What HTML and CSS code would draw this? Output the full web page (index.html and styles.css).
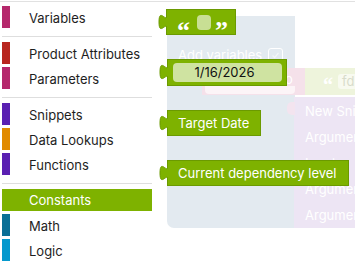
FILE: index.html
```html
<!DOCTYPE html>
<html lang="en">
<head>
<meta charset="utf-8">
<title>Blocks</title>
<link rel="stylesheet" href="styles.css">
</head>
<body>
<div class="app">
  <nav class="toolbox">
    <div class="cat"><span class="bar c-variables"></span><span class="label">Variables</span></div>
    <div class="sep"></div>
    <div class="cat"><span class="bar c-product"></span><span class="label">Product Attributes</span></div>
    <div class="cat"><span class="bar c-params"></span><span class="label">Parameters</span></div>
    <div class="sep"></div>
    <div class="cat"><span class="bar c-snippets"></span><span class="label">Snippets</span></div>
    <div class="cat"><span class="bar c-lookups"></span><span class="label">Data Lookups</span></div>
    <div class="cat"><span class="bar c-functions"></span><span class="label">Functions</span></div>
    <div class="sep"></div>
    <div class="cat selected"><span class="bar c-constants"></span><span class="label">Constants</span></div>
    <div class="cat"><span class="bar c-math"></span><span class="label">Math</span></div>
    <div class="cat"><span class="bar c-logic"></span><span class="label">Logic</span></div>
  </nav>

  <main class="workspace">
    <div class="canvas">
      <div class="ws-panel-blue">
        <div class="ws-row"><span>Add variables</span><span class="ws-check"><svg viewBox="0 0 15 14" width="15" height="14"><path d="M4 7.5 L6.5 10 L11 4.5"/></svg></span></div>
      </div>
      <div class="ws-pink">
        <span class="ws-pink-o">o</span>
        <div class="ws-pink-foot"></div>
      </div>
      <div class="ws-green">
        <span class="ws-green-q">“</span><span class="ws-green-field">fd</span>
      </div>
      <div class="ws-panel-purple">
        <div class="ws-tab-pink"></div>
        <div class="ws-line">New Snippet</div>
        <div class="ws-line">Arguments</div>
        <div class="ws-line">Input</div>
        <div class="ws-line">Arguments</div>
        <div class="ws-line">Arguments</div>
      </div>
    </div>

    <div class="flyout">
      <div class="block block-text">
        <svg class="tab" viewBox="0 0 9 16" width="9" height="16"><path d="M9,0.5 c0,10 -8,-8 -8,7.5 s8,-2.5 8,7.5"/></svg>
        <span class="quote">“</span><span class="text-field"></span><span class="quote">”</span>
      </div>
      <div class="block block-date">
        <svg class="tab" viewBox="0 0 9 16" width="9" height="16"><path d="M9,0.5 c0,10 -8,-8 -8,7.5 s8,-2.5 8,7.5"/></svg>
        <span class="date-field">1/16/2026</span>
      </div>
      <div class="block">
        <svg class="tab" viewBox="0 0 9 16" width="9" height="16"><path d="M9,0.5 c0,10 -8,-8 -8,7.5 s8,-2.5 8,7.5"/></svg>
        Target Date
      </div>
      <div class="block">
        <svg class="tab" viewBox="0 0 9 16" width="9" height="16"><path d="M9,0.5 c0,10 -8,-8 -8,7.5 s8,-2.5 8,7.5"/></svg>
        Current dependency level
      </div>
    </div>
  </main>
</div>
</body>
</html>
```

FILE: styles.css
```css
* { box-sizing: border-box; }

body {
  margin: 0;
  background: #ffffff;
  font-family: Inter, "Noto Sans", sans-serif;
}

.app {
  display: flex;
  margin-top: 1px;
  border-top: 1px solid #e1e1e1;
  height: 270px;
  overflow: hidden;
}

/* ---------- toolbox ---------- */
.toolbox {
  width: 152px;
  flex: none;
  padding: 4px 0 0 2px;
  display: flex;
  flex-direction: column;
}

.cat {
  display: flex;
  align-items: stretch;
  height: 22px;
  margin-bottom: 3px;
  font-size: 13px;
  color: #1e1e1e;
}

.bar {
  width: 8px;
  flex: none;
}

.label {
  margin-left: 19px;
  padding-top: 3px;
  line-height: 18px;
}

.sep {
  height: 1px;
  background: #dedede;
  margin: 5px 0;
}

.c-variables { background: #b5286c; }
.c-product   { background: #b8261f; }
.c-params    { background: #b5286c; }
.c-snippets  { background: #5a20b2; }
.c-lookups   { background: #e18a00; }
.c-functions { background: #5a20b2; }
.c-constants { background: #7eb200; }
.c-math      { background: #0a6f96; }
.c-logic     { background: #0599cd; }

.cat.selected {
  background: #7eb200;
  color: #ffffff;
}
.cat.selected .label { padding-top: 2px; }

/* ---------- workspace ---------- */
.workspace {
  position: relative;
  flex: 1;
  overflow: hidden;
}

.canvas {
  position: absolute;
  inset: 0;
  font-size: 13px;
  color: #ffffff;
}

.ws-panel-blue {
  position: absolute;
  left: 15px;
  top: 14px;
  width: 128px;
  height: 212px;
  background: #e3eaf0;
  border-radius: 0 0 0 7px;
  padding: 31px 0 0 11px;
}

.ws-row {
  display: flex;
  align-items: center;
  gap: 6px;
  height: 16px;
}

.ws-check {
  width: 15px;
  height: 14px;
  border: 1.5px solid #ffffff;
  border-radius: 3px;
  display: flex;
}
.ws-check svg { width: 100%; height: 100%; }
.ws-check path { fill: none; stroke: #f4f6f8; stroke-width: 1.5; }

.ws-pink {
  position: absolute;
  left: 50px;
  top: 66px;
  width: 104px;
  height: 27px;
  background: #f5e1ea;
}
.ws-pink-o {
  position: absolute;
  left: 83px;
  top: 3px;
  line-height: 16px;
}
.ws-pink-foot {
  position: absolute;
  left: 3px;
  top: 18px;
  width: 90px;
  height: 8px;
  background: #fcf4f7;
  border-radius: 0 0 4px 4px;
}

.ws-green {
  position: absolute;
  left: 153px;
  top: 66px;
  width: 60px;
  height: 27px;
  background: #eef4dc;
  display: flex;
  align-items: center;
  padding-left: 18px;
  gap: 5px;
}
.ws-green-q {
  font-family: "Liberation Serif", serif;
  font-weight: bold;
  font-size: 20px;
  line-height: 10px;
  padding-top: 6px;
}
.ws-green-field {
  background: #f8faf0;
  color: #d8dccb;
  border-radius: 3px;
  height: 15px;
  line-height: 15px;
  padding: 0 4px;
}

.ws-panel-purple {
  position: absolute;
  left: 142px;
  top: 95px;
  width: 70px;
  height: 131px;
  background: #ede5f4;
  padding: 1px 0 0 11px;
}
.ws-tab-pink {
  position: absolute;
  left: -7px;
  top: 5px;
  width: 8px;
  height: 13px;
  background: #f3e4ef;
  border-radius: 5px 0 0 5px;
}
.ws-line {
  line-height: 26px;
  white-space: nowrap;
}

/* ---------- flyout blocks ---------- */
.flyout {
  position: relative;
  display: flex;
  flex-direction: column;
  align-items: flex-start;
  gap: 24px;
  padding: 7px 0 0 15px;
}

.block {
  position: relative;
  height: 26px;
  display: flex;
  align-items: center;
  padding: 0 11px 0 10px;
  background: #7eb200;
  border: 1px solid #6b9a00;
  color: #ffffff;
  font-size: 13px;
  white-space: nowrap;
}

.tab {
  position: absolute;
  left: -9px;
  top: 4px;
}
.tab path {
  fill: #7eb200;
  stroke: #6b9a00;
  stroke-width: 1;
}

.block-text {
  margin-left: -1px;
  width: 70px;
  padding: 0 0 0 10px;
}
.quote {
  font-family: "Liberation Serif", serif;
  font-weight: bold;
  font-size: 26px;
  line-height: 12px;
  padding-top: 9px;
  height: 12px;
  overflow: visible;
}
.text-field {
  width: 14px;
  height: 15px;
  margin: 0 4px 0 7px;
  background: #c8df94;
  border-radius: 4px;
}

.block-date {
  height: 27px;
  padding: 0 4px 0 5px;
}
.date-field {
  width: 109px;
  height: 19px;
  background: #cfe3a1;
  border-radius: 4px;
  color: #111111;
  text-align: center;
  line-height: 19px;
  padding-right: 6px;
}
```
